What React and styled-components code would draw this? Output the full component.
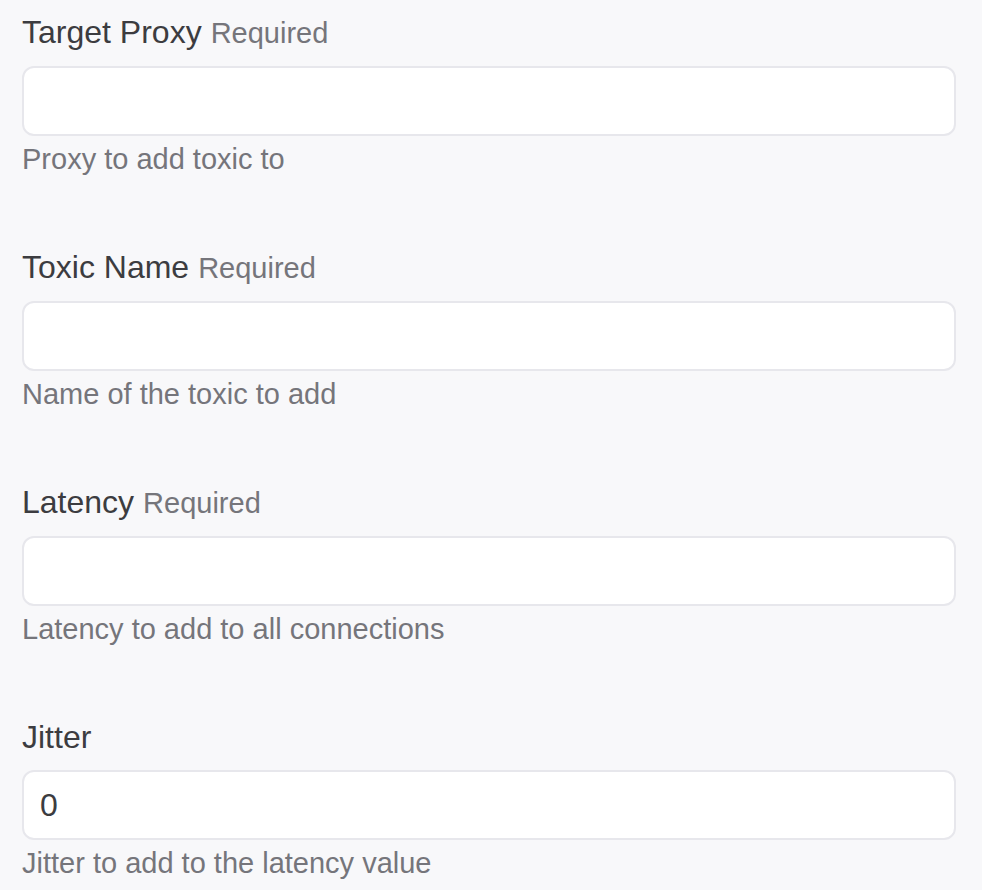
import React from 'react';
import styled, { createGlobalStyle } from 'styled-components';

const GlobalStyle = createGlobalStyle`
	html, body {
		margin: 0;
		padding: 0;
		background: #f8f8fa;
		font-family: "Liberation Sans", Arial, sans-serif;
	}
`;

const Form = styled.form`
	display: flex;
	flex-direction: column;
	gap: 68px;
	padding: 12px 26px 0 22px;
`;

const Field = styled.div`
	display: flex;
	flex-direction: column;
`;

const Label = styled.label`
	display: block;
	font-size: 32px;
	line-height: 40px;
	color: #3c3c40;
	margin-bottom: 13px;
`;

const Required = styled.span`
	font-size: 29px;
	color: #75757b;
	margin-left: 9px;
`;

const Input = styled.input`
	box-sizing: border-box;
	width: 100%;
	height: 70px;
	padding: 0 16px;
	border: 2px solid #e7e7ec;
	border-radius: 12px;
	background: #ffffff;
	font-family: inherit;
	font-size: 32px;
	color: #3c3c40;
	outline: none;
`;

const Help = styled.div`
	font-size: 29px;
	line-height: 40px;
	margin-top: 3px;
	color: #75757b;
`;

const fields = [
	{ label: 'Target Proxy', required: true, help: 'Proxy to add toxic to', value: '' },
	{ label: 'Toxic Name', required: true, help: 'Name of the toxic to add', value: '' },
	{ label: 'Latency', required: true, help: 'Latency to add to all connections', value: '' },
	{ label: 'Jitter', required: false, help: 'Jitter to add to the latency value', value: '0' },
];

export default function App() {
	return (
		<>
			<GlobalStyle />
			<Form>
				{fields.map((f) => (
					<Field key={f.label}>
						<Label>
							{f.label}
							{f.required && <Required>Required</Required>}
						</Label>
						<Input defaultValue={f.value} />
						<Help>{f.help}</Help>
					</Field>
				))}
			</Form>
		</>
	);
}
